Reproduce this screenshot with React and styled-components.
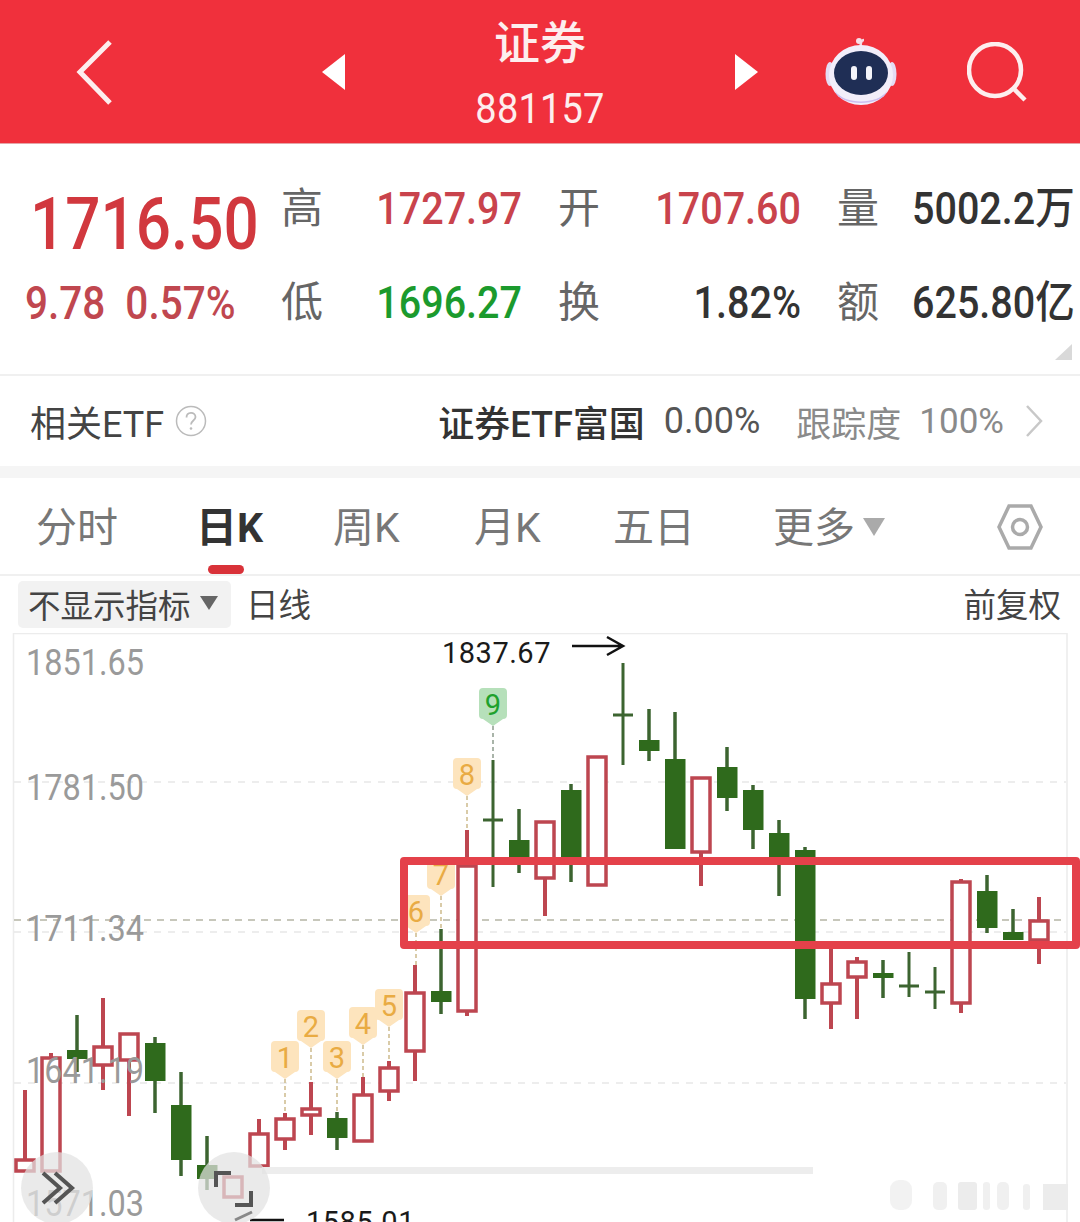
import styled, { createGlobalStyle } from 'styled-components';

const FONT = 'Roboto, "Noto Sans CJK SC", sans-serif';
const RED = '#bd4650';
const GREEN = '#2f6a1c';
const WICK = '#3c6430';

const GlobalStyle = createGlobalStyle`
  html, body { margin: 0; padding: 0; background: #fff; }
  body { font-family: ${FONT}; }
`;

const Page = styled.div`
  width: 1080px;
  height: 1222px;
  overflow: hidden;
  display: flex;
  flex-direction: column;
  background: #fff;
`;

const Header = styled.header`
  height: 144px;
  flex: none;
  background: #f0303c;
  border-bottom: 1px solid #e5a5a8;
  box-sizing: border-box;
  display: grid;
  grid-template-columns: 322px 23px 1fr 23px 67px 72px 70px 58px 55px;
  align-items: center;
  color: #fff;
`;

const BackButton = styled.div`
  padding-left: 74px;
  display: flex;
`;

const TitleBlock = styled.div`
  display: flex;
  flex-direction: column;
  align-items: center;
  padding-top: 4px;
`;

const Title = styled.div`
  font-size: 46px;
  line-height: 50px;
  font-weight: 500;
  color: #fdeeee;
`;

const Code = styled.div`
  font-size: 38px;
  line-height: 44px;
  margin-top: 18px;
  letter-spacing: 0.2px;
  color: #fdeeee;
  transform: scaleY(1.12);
`;

const Spacer = styled.div``;

const Stats = styled.section`
  height: 232px;
  flex: none;
  box-sizing: border-box;
  padding-top: 19px;
  position: relative;
  border-bottom: 2px solid #f0f0f0;
  display: grid;
  grid-template-columns: 282px 78px 162px 119px 160px 111px 168px;
  grid-template-rows: 92px 96px;
  align-items: center;
`;

const BigPrice = styled.div`
  font-size: 62px;
  line-height: 70px;
  font-weight: 500;
  color: #d1383e;
  padding: 28px 0 0 30px;
  transform: scaleY(1.15);
`;

const Change = styled.div`
  font-size: 40.5px;
  line-height: 50px;
  font-weight: 500;
  color: #c0474f;
  padding-left: 25px;
  white-space: pre;
  word-spacing: 10px;
  transform: scaleY(1.12);
`;

const StatLabel = styled.div`
  font-size: 42px;
  line-height: 50px;
  color: #666;
  margin-left: -1px;
  padding-left: ${props => (props.$inset ? '37px' : '0')};
`;

const StatValue = styled.div`
  font-size: 39.5px;
  line-height: 50px;
  font-weight: 500;
  text-align: ${props => (props.$left ? 'left' : 'right')};
  color: ${props => props.$color || '#333'};
  white-space: nowrap;
  transform: scaleY(1.12);
`;

const Fold = styled.div`
  position: absolute;
  right: 8px;
  bottom: 14px;
  width: 0;
  height: 0;
  border-left: 17px solid transparent;
  border-bottom: 16px solid #d9d9d9;
`;

const EtfRow = styled.div`
  height: 90px;
  flex: none;
  padding: 0 37px 0 30px;
  display: flex;
  align-items: center;
  font-size: 36px;
  color: #444;
`;

const EtfName = styled.span`
  margin-left: auto;
  color: #333;
  font-weight: 500;
`;

const EtfPercent = styled.span`
  margin-left: 19px;
  color: #555;
`;

const EtfMuted = styled.span`
  font-size: 35px;
  color: #8a8a8a;
  margin-left: ${props => props.$gap}px;
`;

const HelpIcon = styled.svg`
  margin-left: 11px;
`;

const EtfArrow = styled.svg`
  margin-left: 21px;
`;

const Band = styled.div`
  height: 12px;
  flex: none;
  background: #f5f5f5;
`;

const Tabs = styled.nav`
  height: 98px;
  flex: none;
  box-sizing: border-box;
  border-bottom: 2px solid #f0f0f0;
  display: grid;
  grid-template-columns: 160px 137px 141px 139px 160px 224px 46px;
  padding-left: 36px;
  align-items: center;
  position: relative;
`;

const Tab = styled.div`
  font-size: 41px;
  line-height: 96px;
  padding-top: 2px;
  color: ${props => (props.$active ? '#333' : '#777')};
  font-weight: ${props => (props.$active ? 700 : 400)};
  display: flex;
  align-items: center;
  gap: 8px;
`;

const TabCaret = styled.span`
  width: 0;
  height: 0;
  margin-top: -2px;
  border-left: 11px solid transparent;
  border-right: 11px solid transparent;
  border-top: 18px solid #aaa;
`;

const Underline = styled.div`
  position: absolute;
  left: 208px;
  bottom: 0;
  width: 36px;
  height: 9px;
  border-radius: 5px;
  background: #d93239;
`;

const SubBar = styled.div`
  height: 57px;
  flex: none;
  box-sizing: border-box;
  padding: 5px 19px 0 18px;
  display: flex;
  align-items: flex-start;
  font-size: 32.5px;
  color: #444;
`;

const IndicatorPicker = styled.div`
  width: 213px;
  height: 47px;
  box-sizing: border-box;
  padding: 0 0 3px 10px;
  background: #f2f2f2;
  border-radius: 5px;
  display: flex;
  align-items: center;
  gap: 9px;
`;

const PickerCaret = styled.span`
  width: 0;
  height: 0;
  border-left: 9px solid transparent;
  border-right: 9px solid transparent;
  border-top: 14px solid #666;
`;

const SubLabel = styled.span`
  line-height: 47px;
  margin-top: 2px;
  margin-left: ${props => props.$gap || 0}px;
`;

const AdjustLabel = styled(SubLabel)`
  margin-left: auto;
`;

const ChartArea = styled.div`
  flex: 1;
  position: relative;
  overflow: hidden;
`;

const ChartSvg = styled.svg`
  display: block;
  width: 1080px;
  height: 589px;
`;

const AxisLabel = styled.text`
  font-family: ${FONT};
  font-size: 32.500px;
  fill: #9a9a9a;
  transform-box: fill-box;
  transform-origin: center;
  transform: scaleY(1.12);
`;

const PriceNote = styled.text`
  font-family: ${FONT};
  font-size: 29px;
  letter-spacing: 0.5px;
  fill: #1a1a1a;
`;

const BadgeDigit = styled.text`
  font-family: ${FONT};
  font-size: 29px;
  text-anchor: middle;
  fill: ${props => props.$fill};
`;

const Annotation = styled.div`
  position: absolute;
  left: 400px;
  top: 224px;
  width: 680px;
  height: 92px;
  box-sizing: border-box;
  border: 8px solid #e4414a;
  border-radius: 4px;
`;

const FloatButton = styled.div`
  position: absolute;
  left: ${props => props.$left}px;
  top: 519px;
  width: 72px;
  height: 72px;
  border-radius: 50%;
  background: rgba(226, 226, 226, 0.72);
`;

const FloatIcon = styled.svg`
  display: block;
  width: 72px;
  height: 72px;
`;

// [x, wickTop, wickBottom, bodyTop, bodyBottom, colour]
const candles = [
  [25, 1090, 1160, 1160, 1171, 'r'],
  [51, 1053, 1172, 1058, 1171, 'r'],
  [77, 1015, 1072, 1050, 1059, 'g'],
  [103, 998, 1090, 1047, 1065, 'r'],
  [129, 1033, 1116, 1034, 1060, 'r'],
  [155, 1037, 1113, 1043, 1081, 'g'],
  [181, 1072, 1176, 1105, 1160, 'g'],
  [207, 1136, 1190, 1165, 1179, 'g'],
  [233, 1176, 1198, 1177, 1197, 'r'],
  [259, 1119, 1167, 1134, 1166, 'r'],
  [285, 1113, 1150, 1119, 1139, 'r'],
  [311, 1082, 1135, 1109, 1115, 'r'],
  [337, 1112, 1150, 1118, 1138, 'g'],
  [363, 1077, 1142, 1095, 1141, 'r'],
  [389, 1061, 1101, 1068, 1091, 'r'],
  [415, 965, 1081, 993, 1051, 'r'],
  [441, 929, 1014, 991, 1002, 'g'],
  [467, 830, 1016, 866, 1011, 'r'],
  [493, 760, 887, 820, 820, 'g'],
  [519, 809, 873, 840, 858, 'g'],
  [545, 821, 916, 822, 878, 'r'],
  [571, 784, 882, 790, 858, 'g'],
  [597, 757, 886, 757, 885, 'r'],
  [623, 663, 765, 715, 715, 'g'],
  [649, 709, 761, 740, 751, 'g'],
  [675, 712, 849, 759, 849, 'g'],
  [701, 778, 886, 778, 852, 'r'],
  [727, 747, 811, 767, 798, 'g'],
  [753, 785, 849, 790, 830, 'g'],
  [779, 820, 896, 833, 860, 'g'],
  [805, 847, 1019, 850, 999, 'g'],
  [831, 946, 1029, 984, 1003, 'r'],
  [857, 957, 1019, 962, 977, 'r'],
  [883, 960, 998, 973, 978, 'g'],
  [909, 952, 997, 986, 986, 'g'],
  [935, 967, 1009, 992, 992, 'g'],
  [961, 879, 1013, 882, 1003, 'r'],
  [987, 875, 933, 891, 928, 'g'],
  [1013, 909, 940, 932, 940, 'g'],
  [1039, 897, 964, 921, 940, 'r'],
];

// [x, top of badge, digit, bottom of dashed stem]
const badges = [
  [285, 1041, '1', 1113],
  [311, 1010, '2', 1082],
  [337, 1041, '3', 1112],
  [363, 1007, '4', 1077],
  [389, 989, '5', 1061],
  [416, 895, '6', 965],
  [441, 858, '7', 929],
  [467, 758, '8', 830],
  [493, 688, '9', 760],
];

const Candle = ({ c }) => {
  const [x, wickTop, wickBottom, top, bottom, kind] = c;
  if (kind === 'r') {
    return (
      <g>
        <path d={`M${x} ${wickTop}V${top}M${x} ${bottom}V${wickBottom}`} stroke={RED} strokeWidth="4" />
        <rect x={x - 9} y={top} width="18" height={bottom - top} fill="#fff" stroke={RED} strokeWidth="3.5" />
      </g>
    );
  }
  if (top === bottom) {
    return <path d={`M${x} ${wickTop}V${wickBottom}M${x - 10} ${top}H${x + 10}`} stroke={WICK} strokeWidth="3" />;
  }
  return (
    <g>
      <path d={`M${x} ${wickTop}V${wickBottom}`} stroke={WICK} strokeWidth="3.5" />
      <rect x={x - 10} y={top} width="20.5" height={bottom - top} fill={GREEN} />
    </g>
  );
};

const Badge = ({ b }) => {
  const [x, y, digit, stem] = b;
  const green = digit === '9';
  return (
    <g>
      <line x1={x} y1={y + 38} x2={x} y2={stem} stroke={green ? '#8d9c8d' : '#cdbb8c'} strokeWidth="1.5" strokeDasharray="4 3" />
      <path
        d={`M${x - 10} ${y}h20a4 4 0 0 1 4 4v23a4 4 0 0 1 -4 4l-10 7l-10 -7a4 4 0 0 1 -4 -4v-23a4 4 0 0 1 4 -4z`}
        fill={green ? '#b6e0ba' : '#fde4bd'}
      />
      <BadgeDigit x={x} y={y + 27} $fill={green ? '#1fa12c' : '#e9ab43'}>{digit}</BadgeDigit>
    </g>
  );
};

const RobotIcon = () => (
  <svg width="72" height="70" viewBox="0 0 72 70">
    <path d="M36 12c-1-5 0-9 3-9" fill="none" stroke="#f3d9e4" strokeWidth="2.5" />
    <circle cx="34" cy="4" r="3" fill="#f7dfe8" />
    <ellipse cx="5" cy="37" rx="4.5" ry="12" fill="#e4dcf4" />
    <ellipse cx="67" cy="37" rx="4.5" ry="12" fill="#e4dcf4" />
    <ellipse cx="36" cy="38" rx="32" ry="30" fill="#f2eefa" />
    <path d="M10 54c10 14 42 14 52 0c-4 16-48 16-52 0z" fill="#cdbff0" />
    <ellipse cx="36" cy="36" rx="27" ry="22" fill="#1f2e55" />
    <rect x="26" y="29" width="6" height="14" rx="3" fill="#f4f4fa" />
    <rect x="41" y="29" width="6" height="14" rx="3" fill="#f4f4fa" />
  </svg>
);

const App = () => (
  <Page>
    <GlobalStyle />
    <Header>
      <BackButton>
        <svg width="42" height="66" viewBox="0 0 42 66">
          <path d="M36 3L6 33l30 31" fill="none" stroke="#fdeeee" strokeWidth="5" />
        </svg>
      </BackButton>
      <svg width="23" height="36" viewBox="0 0 23 36"><path d="M23 0V36L0 18z" fill="#fff" /></svg>
      <TitleBlock>
        <Title>证券</Title>
        <Code>881157</Code>
      </TitleBlock>
      <svg width="23" height="36" viewBox="0 0 23 36"><path d="M0 0V36L23 18z" fill="#fff" /></svg>
      <Spacer />
      <RobotIcon />
      <Spacer />
      <svg width="60" height="60" viewBox="0 0 60 60">
        <circle cx="28" cy="28" r="26" fill="none" stroke="#fdeeee" strokeWidth="4.5" />
        <path d="M46 46l12 12" stroke="#fdeeee" strokeWidth="4.5" />
      </svg>
    </Header>

    <Stats>
      <BigPrice>1716.50</BigPrice>
      <StatLabel>高</StatLabel>
      <StatValue $color="#c9434c">1727.97</StatValue>
      <StatLabel $inset>开</StatLabel>
      <StatValue $color="#c9434c">1707.60</StatValue>
      <StatLabel $inset>量</StatLabel>
      <StatValue $left>5002.2万</StatValue>

      <Change>9.78 0.57%</Change>
      <StatLabel>低</StatLabel>
      <StatValue $color="#1b9a2d">1696.27</StatValue>
      <StatLabel $inset>换</StatLabel>
      <StatValue>1.82%</StatValue>
      <StatLabel $inset>额</StatLabel>
      <StatValue $left>625.80亿</StatValue>
      <Fold />
    </Stats>

    <EtfRow>
      相关ETF
      <HelpIcon width="32" height="32" viewBox="0 0 32 32">
        <circle cx="16" cy="16" r="14.5" fill="none" stroke="#bbb" strokeWidth="1.5" />
        <path d="M11.5 12.5c0-6 9-6 9-.5c0 3.500-4.500 3.500-4.500 7.500" fill="none" stroke="#bbb" strokeWidth="1.8" />
        <circle cx="16" cy="23.500" r="1.300" fill="#bbb" />
      </HelpIcon>
      <EtfName>证券ETF富国</EtfName>
      <EtfPercent>0.00%</EtfPercent>
      <EtfMuted $gap={36}>跟踪度</EtfMuted>
      <EtfMuted $gap={18}>100%</EtfMuted>
      <EtfArrow width="18" height="34" viewBox="0 0 18 34">
        <path d="M2 2l14 15L2 32" fill="none" stroke="#c8c8c8" strokeWidth="2.5" />
      </EtfArrow>
    </EtfRow>

    <Band />

    <Tabs>
      <Tab>分时</Tab>
      <Tab $active>日K</Tab>
      <Tab>周K</Tab>
      <Tab>月K</Tab>
      <Tab>五日</Tab>
      <Tab>更多<TabCaret /></Tab>
      <svg width="46" height="48" viewBox="0 0 46 48">
        <path d="M12 3h22l10 21l-10 21H12L2 24z" fill="none" stroke="#aaa" strokeWidth="3.500" />
        <circle cx="23" cy="24" r="7.500" fill="none" stroke="#aaa" strokeWidth="3.500" />
      </svg>
      <Underline />
    </Tabs>

    <SubBar>
      <IndicatorPicker>
        不显示指标
        <PickerCaret />
      </IndicatorPicker>
      <SubLabel $gap={15}>日线</SubLabel>
      <AdjustLabel>前复权</AdjustLabel>
    </SubBar>

    <ChartArea>
      <ChartSvg viewBox="0 633 1080 589">
        <path d="M13.500 1222V633.500H1067V1222" fill="none" stroke="#ececec" strokeWidth="1.500" />
        <g stroke="#e8e8e8" strokeWidth="1.500" strokeDasharray="7 7">
          <line x1="14" y1="782" x2="1066" y2="782" />
          <line x1="14" y1="932" x2="1066" y2="932" />
          <line x1="14" y1="1083" x2="1066" y2="1083" />
        </g>
        <line x1="14" y1="920" x2="1066" y2="920" stroke="#b5b5a5" strokeWidth="1.500" strokeDasharray="7 6" />

        {candles.map(c => <Candle key={c[0]} c={c} />)}
        {badges.map(b => <Badge key={b[2]} b={b} />)}

        <AxisLabel x="26" y="674">1851.65</AxisLabel>
        <AxisLabel x="26" y="799">1781.50</AxisLabel>
        <AxisLabel x="26" y="940">1711.34</AxisLabel>
        <AxisLabel x="26" y="1082">1641.19</AxisLabel>
        <AxisLabel x="26" y="1215">1571.03</AxisLabel>

        <PriceNote x="442" y="663">1837.67</PriceNote>
        <path d="M572 646H623M607 637l16 9l-16 9" fill="none" stroke="#111" strokeWidth="2.500" />
        <path d="M250 1220H284" stroke="#111" strokeWidth="2.500" />
        <PriceNote x="306" y="1232">1585.01</PriceNote>

        <rect x="262" y="1167" width="551" height="7" fill="#ededed" />

        <g fill="#ececec">
          <rect x="890" y="1180" width="22" height="30" rx="9" opacity="0.7" />
          <rect x="933" y="1182" width="14" height="28" rx="5" opacity="0.8" />
          <rect x="958" y="1182" width="19" height="28" rx="3" />
          <rect x="983" y="1182" width="7" height="28" rx="3" opacity="0.8" />
          <rect x="997" y="1182" width="12" height="28" rx="5" opacity="0.8" />
          <rect x="1023" y="1184" width="7" height="26" rx="3" opacity="0.8" />
          <rect x="1043" y="1184" width="25" height="26" />
        </g>
      </ChartSvg>

      <Annotation />

      <FloatButton $left={21}>
        <FloatIcon viewBox="0 0 72 72">
          <path d="M22 21l17 15l-17 15M34 21l17 15l-17 15" fill="none" stroke="#555" strokeWidth="4" />
        </FloatIcon>
      </FloatButton>
      <FloatButton $left={198}>
        <FloatIcon viewBox="0 0 72 72">
          <path d="M33 21H18V35M37 53H53V39" fill="none" stroke="#555" strokeWidth="4" />
          <path d="M54 60L37 68" fill="none" stroke="#888" strokeWidth="3" />
        </FloatIcon>
      </FloatButton>
    </ChartArea>
  </Page>
);

export default App;
